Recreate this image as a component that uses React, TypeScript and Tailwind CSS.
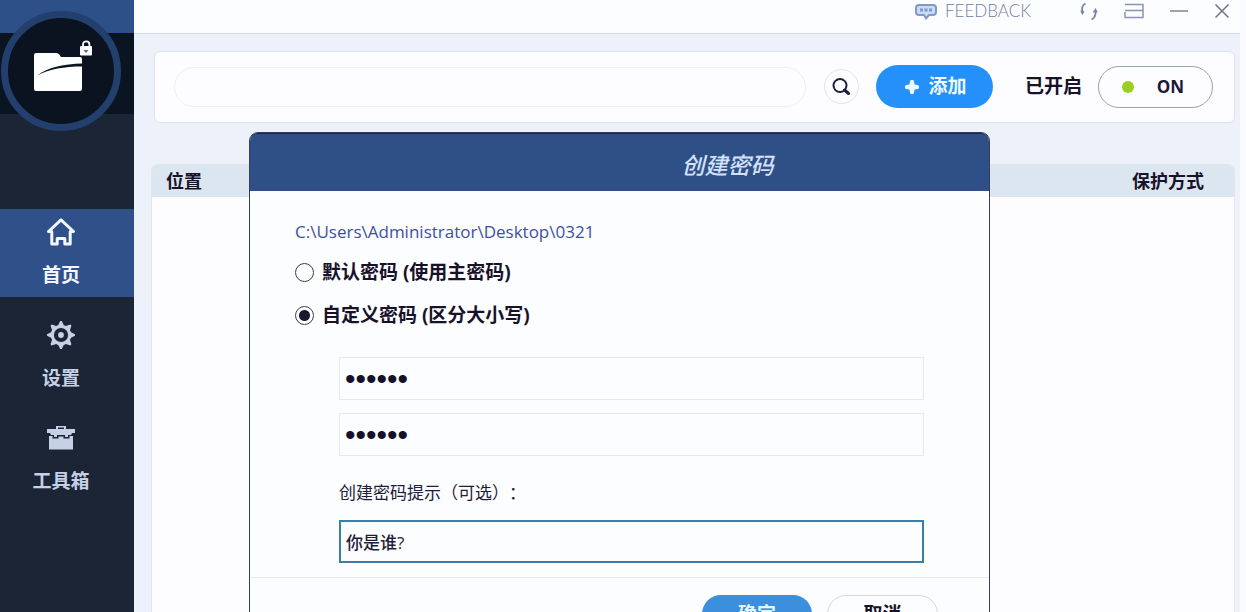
import React, { useState } from 'react';

interface NavItem {
  id: string;
  label: string;
  icon: React.ReactNode;
}

const HomeIcon = () => (
  <svg viewBox="0 0 30 30" className="h-[30px] w-[30px]" fill="none" stroke="currentColor" strokeWidth="3" strokeLinejoin="round">
    <path d="M2.500 14.500 15 2.800l12.500 11.700h-3.300V27h-5.400v-5.500h-7.600V27H5.800V14.500z" />
  </svg>
);

const GearIcon = () => (
  <svg viewBox="0 0 30 30" className="h-[30px] w-[30px]" fill="currentColor">
    <circle cx="15" cy="15" r="8.700" fill="none" stroke="currentColor" strokeWidth="3.200" />
    {[0, 45, 90, 135, 180, 225, 270, 315].map((angle) => (
      <path key={angle} d="M11.800 6 14.200 1h1.600l2.400 5z" transform={`rotate(${angle} 15 15)`} />
    ))}
    <circle cx="15" cy="15" r="2.900" />
  </svg>
);

const ToolboxIcon = () => (
  <svg viewBox="0 0 30 30" className="h-[30px] w-[30px]" fill="currentColor">
    <path fillRule="evenodd" d="M10 3h10v3h9v4h-3l-1 2h-3v2h-3v-2h-8v2H8v-2H5l-1-2H1V6h9zm2 1.500V6h6V4.500z" />
    <path d="M3 13h3.500v2.500h6V13.500h5v2h6V13H27v13.500H3z" />
  </svg>
);

const LogoIcon = () => (
  <svg viewBox="0 0 62 62" className="h-[62px] w-[62px] shrink-0">
    <path d="M6 13h20q3 0 5 4h19q2 0 2 2v30q0 2-2 2H6q-2 0-2-2V15q0-2 2-2z" fill="#fff" />
    <path d="M7 35.500C19 27 34 24 52 23.500V26.500C34 26.500 20 29 7 35.500z" fill="#0b1521" />
    <path d="M53 7V4.500a3.200 3.200 0 0 1 6.400 0V7" fill="none" stroke="#fff" strokeWidth="1.800" />
    <rect x="50" y="6" width="12" height="9.500" rx="1" fill="#fff" />
    <path d="M53.500 10h5l-2.500 3z" fill="#5b6b86" />
  </svg>
);

const BubbleIcon = () => (
  <svg viewBox="0 0 22 17" className="h-[17px] w-[22px]" fill="#c7dcf5" stroke="#8398c2" strokeWidth="2">
    <path d="M4 2h14q3 0 3 3v4q0 3-3 3h-4l-3 3.500L9 12H4q-3 0-3-3V5q0-3 3-3z" />
    <path d="M5 7h3M9.500 7h3M14 7h3" strokeWidth="3" />
  </svg>
);

const SyncIcon = () => (
  <svg viewBox="0 0 20 18" className="h-[18px] w-[20px]" fill="none" stroke="#7d86a8">
    <path d="M6.500 1.500C3 3 2.500 6.500 3.500 11.500" strokeWidth="1.800" />
    <path d="M2 8.500l1.500 3 1.200-2.500" strokeWidth="1.500" />
    <path d="M12.500 17.500c3.500-1.500 4.500-5 4-9.500" strokeWidth="1.800" />
    <path d="M14.500 10.500l2-3 1.500 3" strokeWidth="1.500" />
  </svg>
);

const MenuIcon = () => (
  <svg viewBox="0 0 20 16" className="h-[16px] w-[20px]" fill="none" stroke="#8995b5" strokeWidth="1.500">
    <path d="M1 1.500h18v6H1M1 9v5.500h18V7.500" />
  </svg>
);

const navItems: NavItem[] = [
  { id: 'home', label: '首页', icon: <HomeIcon /> },
  { id: 'settings', label: '设置', icon: <GearIcon /> },
  { id: 'tools', label: '工具箱', icon: <ToolboxIcon /> }
];

const Sidebar: React.FC = () => {
  const [active, setActive] = useState('home');

  return (
    <aside className="w-[134px] shrink-0 bg-[#1b2535]">
      <div className="h-[209px] bg-[linear-gradient(#2c5087_33px,#0b1521_33px,#0b1521_114px,#1b2535_114px)] pl-px pt-[11px]">
        <div className="flex h-[120px] w-[120px] items-center justify-center rounded-full border-[7px] border-[#223f6e] bg-[#0a131f]">
          <LogoIcon />
        </div>
      </div>
      <nav className="flex flex-col gap-[15px]">
        {navItems.map((item) => (
          <button
            key={item.id}
            type="button"
            onClick={() => setActive(item.id)}
            className={
              active === item.id
                ? 'flex h-[88px] flex-col items-center gap-4 bg-[#2f5088] pr-3 pt-2 text-[#f2f6ff]'
                : 'flex h-[88px] flex-col items-center gap-4 pr-3 pt-2 text-[#c6d1e6]'
            }
          >
            {item.icon}
            <span className="text-[19px] font-bold leading-6">{item.label}</span>
          </button>
        ))}
      </nav>
    </aside>
  );
};

const TitleBar: React.FC = () => (
  <header className="flex h-[34px] items-center justify-end border-b border-[#d3dbe9] bg-[#fcfdff] pb-[11px] pr-[10px]">
    <a href="#feedback" className="mr-12 flex items-center gap-2 font-['Lato'] text-[17px] font-light leading-5 text-[#6f7da3]">
      <BubbleIcon />
      FEEDBACK
    </a>
    <div className="flex items-center gap-[25px]">
      <button type="button" aria-label="刷新"><SyncIcon /></button>
      <button type="button" aria-label="菜单"><MenuIcon /></button>
      <button type="button" aria-label="最小化">
        <svg viewBox="0 0 20 16" className="h-[16px] w-[20px]" stroke="#7f8499" strokeWidth="1.500"><path d="M1 8h18" /></svg>
      </button>
      <button type="button" aria-label="关闭">
        <svg viewBox="0 0 16 16" className="h-[16px] w-[16px]" stroke="#6d7389" strokeWidth="1.500"><path d="M1.500 1.500l13 13M14.500 1.500l-13 13" /></svg>
      </button>
    </div>
  </header>
);

const Toolbar: React.FC = () => {
  const [enabled, setEnabled] = useState(true);

  return (
    <div className="flex h-[72px] items-center rounded-md border border-[#dce3ee] bg-[#fdfdff] pb-px pl-[19px] pr-[21px]">
      <input
        type="text"
        aria-label="搜索"
        className="h-10 min-w-0 flex-1 rounded-full border border-[#ebeef4] bg-transparent px-5 text-[17px] outline-none"
      />
      <button
        type="button"
        aria-label="搜索"
        className="ml-[18px] flex h-[35px] w-[35px] items-center justify-center rounded-full border border-[#dfe4ec]"
      >
        <svg viewBox="0 0 20 20" className="h-5 w-5" fill="none" stroke="#201d42">
          <circle cx="9" cy="8.500" r="6.500" strokeWidth="2" />
          <path d="M13.500 13l4 3.500" strokeWidth="3" strokeLinecap="round" />
        </svg>
      </button>
      <button
        type="button"
        className="ml-[17px] flex h-[43px] w-[117px] items-center justify-center gap-2 rounded-full bg-[#2491fb] pl-[2px] text-[19px] font-bold text-[#eefaff]"
      >
        <svg viewBox="0 0 16 16" className="h-[16px] w-[16px]" fill="currentColor"><path d="M7 1h2q1 0 1.500 4.500Q15 6 15 7v2q0 1-4.500 1.500Q10 15 9 15H7q-1 0-1.500-4.500Q1 10 1 9V7q0-1 4.500-1.500Q6 1 7 1z" /></svg>
        添加
      </button>
      <span className="ml-8 text-[19px] font-bold text-[#17122a]">已开启</span>
      <button
        type="button"
        role="switch"
        aria-checked={enabled}
        onClick={() => setEnabled(!enabled)}
        className="ml-4 flex h-[42px] w-[115px] items-center justify-between rounded-full border border-[#9aa2b0] pl-[23px] pr-7 font-['Open_Sans'] text-[17px] font-bold text-[#1c1838]"
      >
        <span className="h-3 w-3 rounded-full bg-[#9ace22]" />
        {enabled ? 'ON' : 'OFF'}
      </button>
    </div>
  );
};

const PasswordDialog: React.FC = () => {
  const [mode, setMode] = useState('custom');
  const [password, setPassword] = useState('032100');
  const [confirm, setConfirm] = useState('032100');
  const [hint, setHint] = useState('你是谁?');

  const radioClass =
    'h-[19px] w-[19px] shrink-0 appearance-none rounded-full border border-[#3d3b52] bg-white checked:bg-[radial-gradient(circle,#1b1930_5px,#ffffff_6px)]';
  const passwordClass =
    "h-[43px] w-full border border-[#e6e8ef] bg-[#fcfdff] px-[5px] font-['Liberation_Sans'] text-[30px] text-[#15112b] outline-none";

  return (
    <div
      role="dialog"
      aria-labelledby="dialog-title"
      className="absolute left-[249px] right-[256px] top-[132px] rounded-t-[9px] border border-[#3b3a5a] bg-[#fcfdff]"
    >
      <div className="flex h-[58px] items-center justify-center rounded-t-lg border-t border-[#14294d] bg-[#2f5086] pl-[216px] pt-1">
        <h2 id="dialog-title" className="text-[23px] font-medium italic leading-8 text-[#d3e1fb]">创建密码</h2>
      </div>
      <form onSubmit={(e) => e.preventDefault()}>
        <div className="pb-[14px] pl-[45px] pr-[65px] pt-[29px]">
          <p className="font-['Open_Sans'] text-[17px] leading-6 text-[#3c50a0]">C:\Users\Administrator\Desktop\0321</p>
          <label className="mt-4 flex items-center gap-2 text-[19px] font-bold leading-6 text-[#17122a]">
            <input type="radio" name="mode" checked={mode === 'default'} onChange={() => setMode('default')} className={radioClass} />
            默认密码 (使用主密码)
          </label>
          <label className="mt-[19px] flex items-center gap-2 text-[19px] font-bold leading-6 text-[#17122a]">
            <input type="radio" name="mode" checked={mode === 'custom'} onChange={() => setMode('custom')} className={radioClass} />
            自定义密码 (区分大小写)
          </label>
          <div className="mt-[30px] flex flex-col pl-11">
            <input type="password" aria-label="密码" value={password} onChange={(e) => setPassword(e.target.value)} className={passwordClass} />
            <input type="password" aria-label="确认密码" value={confirm} onChange={(e) => setConfirm(e.target.value)} className={`mt-[13px] ${passwordClass}`} />
            <label htmlFor="hint" className="mt-[25px] text-[17px] leading-6 text-[#221c38] [text-spacing-trim:space-all]">创建密码提示（可选）：</label>
            <input
              id="hint"
              type="text"
              value={hint}
              onChange={(e) => setHint(e.target.value)}
              className="mt-[15px] h-[43px] w-full border-2 border-[#3a7fa8] bg-[#fcfdff] px-[5px] text-[17px] font-medium text-[#221c38] outline-none"
            />
          </div>
        </div>
        <div className="flex justify-end gap-[15px] border-t border-[#e6eaf2] pb-5 pr-[51px] pt-[17px]">
          <button type="submit" className="h-[38px] w-[110px] rounded-full bg-[#3b8fdd] text-[19px] font-bold text-[#e6f5ff]">确定</button>
          <button type="button" className="h-[38px] w-[111px] rounded-full border border-[#d3d7df] text-[19px] font-bold text-[#17122a]">取消</button>
        </div>
      </form>
    </div>
  );
};

const App: React.FC = () => {
  return (
    <div className="relative flex h-screen overflow-hidden bg-[#edf2fa] font-['Open_Sans','Noto_Sans_CJK_SC',sans-serif]">
      <Sidebar />
      <main className="flex min-w-0 flex-1 flex-col border-r-[6px] border-[#f8fafd]">
        <TitleBar />
        <div className="flex flex-1 flex-col pl-[17px] pr-[5px] pt-[17px]">
          <div className="pl-[3px]">
            <Toolbar />
          </div>
          <div className="mt-[41px] flex-1 rounded-t-md border-x border-[#e0e7f1] bg-[#fdfdff]">
            <table className="w-full">
              <thead>
                <tr className="h-[33px] bg-[#dce6f0] text-[18px] leading-6 text-[#17122a]">
                  <th className="rounded-tl-md pl-[14px] text-left font-bold">位置</th>
                  <th className="rounded-tr-md pr-[30px] text-right font-bold">保护方式</th>
                </tr>
              </thead>
              <tbody />
            </table>
          </div>
        </div>
      </main>
      <PasswordDialog />
    </div>
  );
};

export default App;
